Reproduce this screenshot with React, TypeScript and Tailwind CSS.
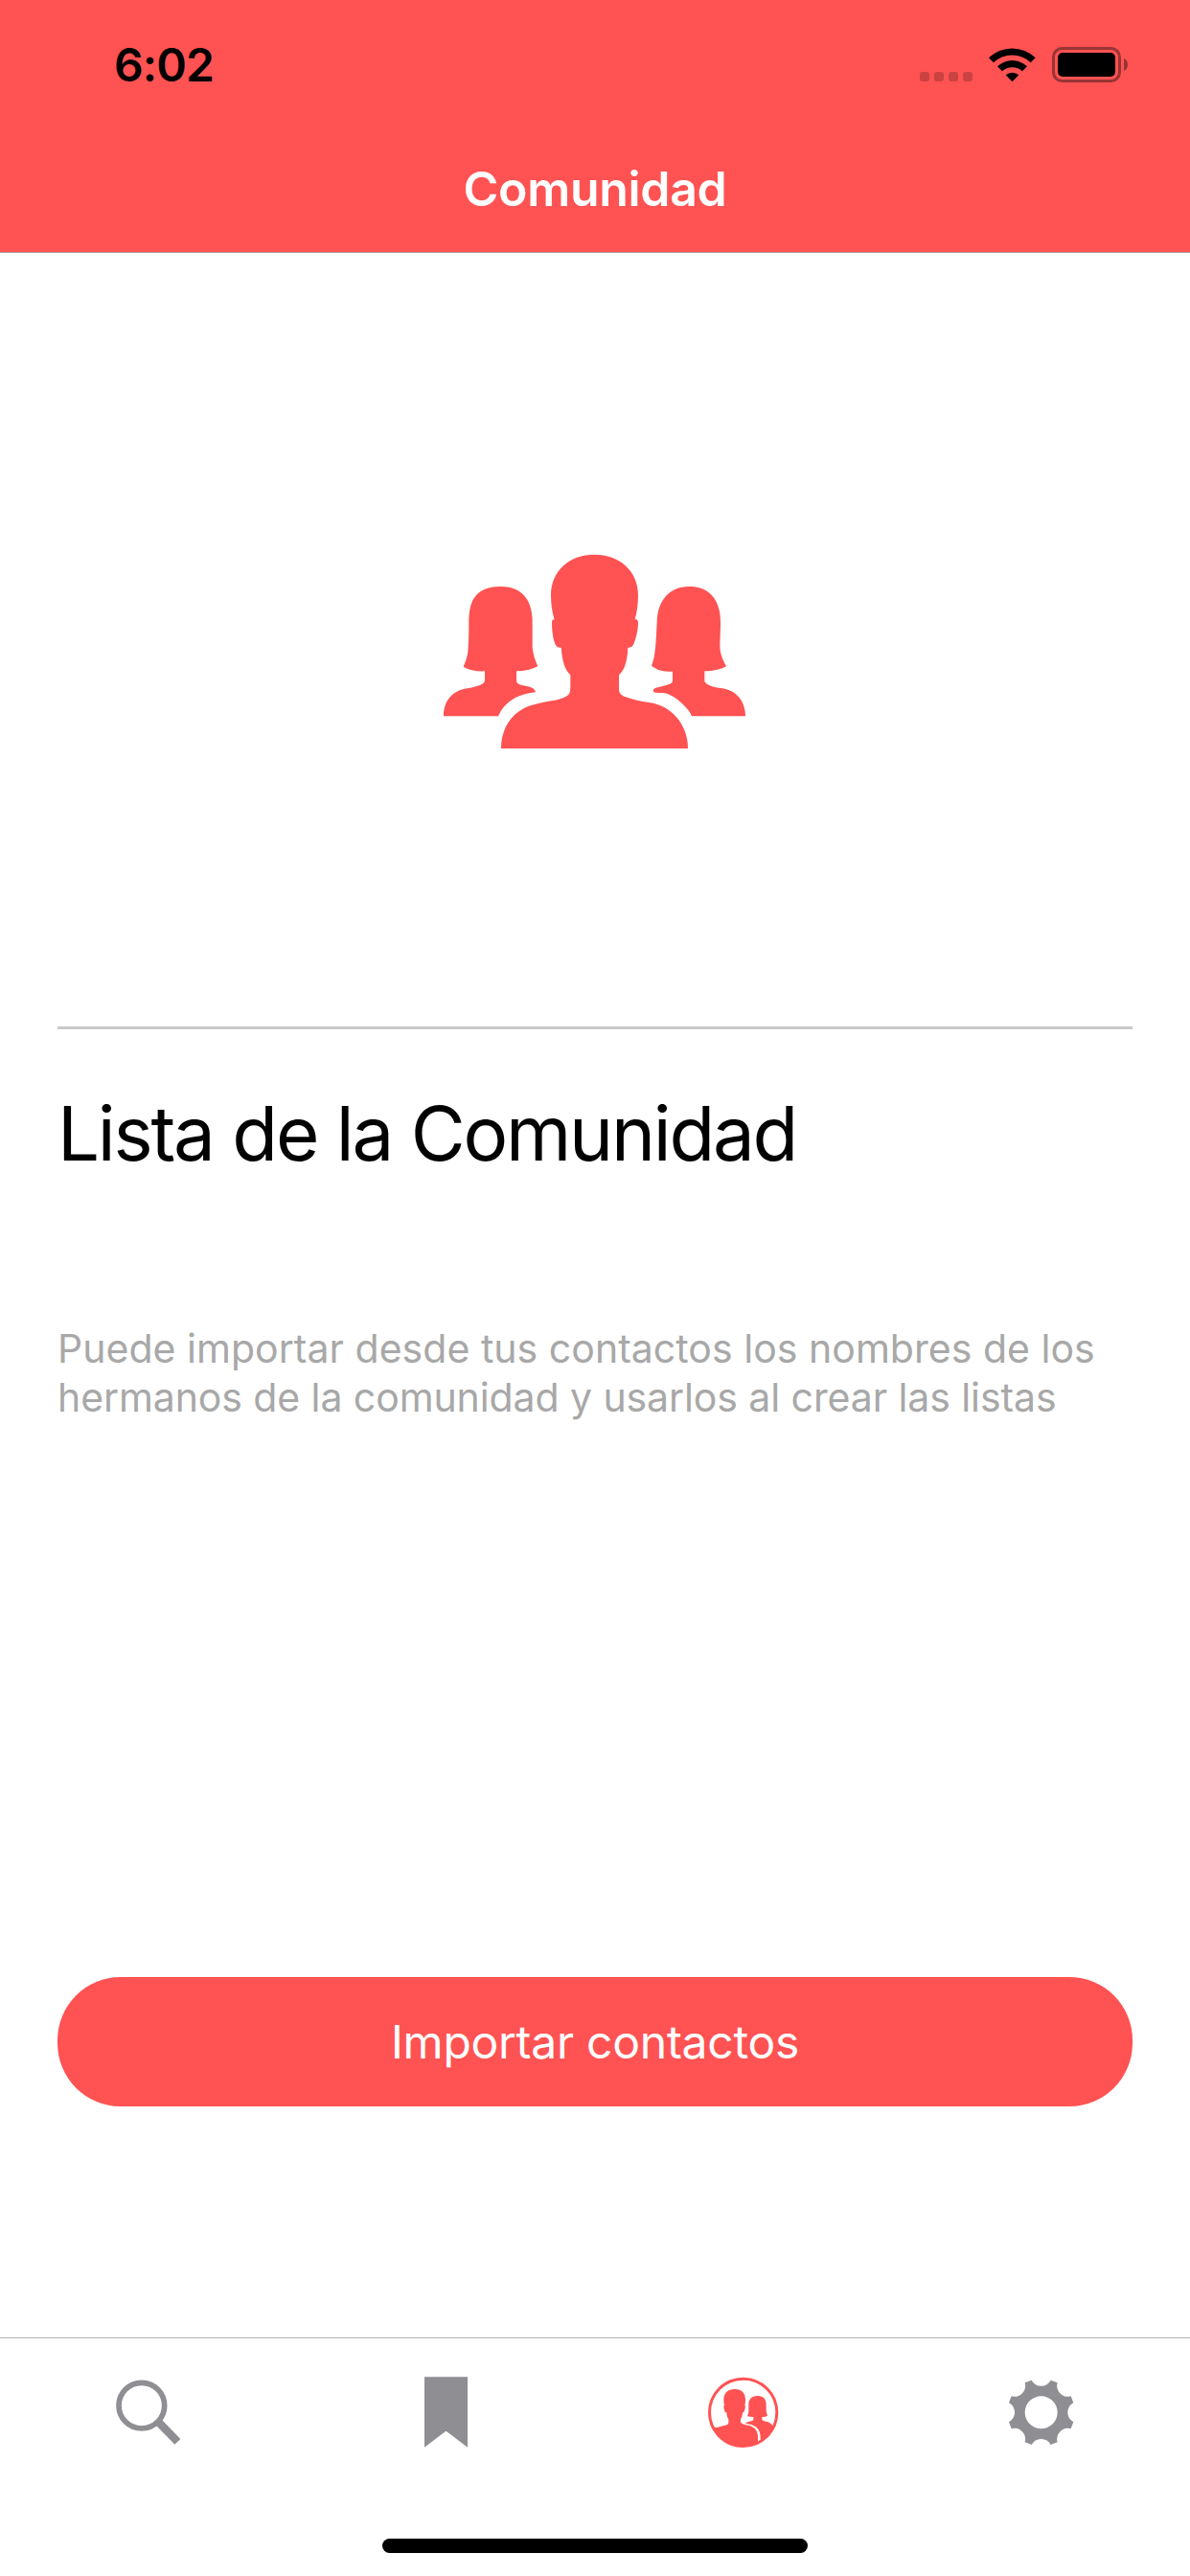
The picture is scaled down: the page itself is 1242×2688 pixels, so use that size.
function SignalDots() {
  return (
    <svg className="h-10 w-[70px]" viewBox="60 51 210 120" fill="#cb4242">
      <rect x="60" y="135" width="30" height="30" rx="9" />
      <rect x="105" y="135" width="30" height="30" rx="9" />
      <rect x="150" y="135" width="30" height="30" rx="9" />
      <rect x="195" y="135" width="30" height="30" rx="9" />
    </svg>
  );
}

function WifiIcon() {
  return (
    <svg className="h-10 w-[60px]" viewBox="270 51 180 120">
      <path d="M276 91A105 105 0 0 1 422 91L407 106A84 84 0 0 0 291 106Z" />
      <path d="M303 118A67 67 0 0 1 396 118L381 133A46 46 0 0 0 318 133Z" />
      <path d="M329 145A30 30 0 0 1 370 145L349.500 166Z" />
    </svg>
  );
}

function BatteryIcon() {
  return (
    <svg className="h-10 w-[90px]" viewBox="450 51 270 120">
      <rect x="478.500" y="61.500" width="207" height="102" rx="27" fill="none" stroke="#993434" strokeWidth="9" />
      <rect x="492" y="75" width="180" height="75" rx="15" />
      <path d="M699 92C715 99 715 125 699 132Z" fill="#993434" />
    </svg>
  );
}

function CommunityArt() {
  return (
    <svg className="h-60 w-90" viewBox="3 0 1080 720" fill="#ff5252">
      <path d="M541 56C620 56 678 108 678 182C678 212 674 238 668 259C675 257 678 262 678 270C678 292 672 316 666 331C662 344 656 348 646 347C645 372 641 396 634 411C629 421 624 427 618 433V477C618 491 626 497 639 502C664 511 690 516 716 520C786 531 834 591 834 663H249C249 591 292 540 352 526C376 519 397 514 418 512C434 509 450 504 459 496C465 490 466 483 466 468V433C459 426 453 417 449 408C442 391 439 370 437 347C427 349 421 344 417 333C411 317 408 293 408 268C408 261 411 258 416 260C409 238 405 212 405 184C405 108 462 56 541 56Z" />
      <path d="M247 156C307 156 336 189 344 234C347 250 347 262 347 280V346C349 369 356 388 364 406C346 415 324 421 297 421V450C297 464 312 464 333 469C347 473 356 478 357 487C312 491 273 509 250 543C246 549 243 556 240 562H69C69 514 97 481 143 475C162 471 180 467 190 461C197 457 198 453 198 445V421C170 422 149 418 131 407C137 393 143 377 145 361C147 340 148 310 148 272C148 246 150 232 153 220C163 178 194 156 247 156Z" />
      <path d="M838 156C891 156 922 185 932 230C936 246 936 262 936 278L934 340C934 366 943 386 954 406C934 416 914 421 886 421V454C893 463 907 471 930 473C982 476 1014 513 1014 562H846C841 548 831 537 818 524C798 505 777 492 757 489C747 488 739 491 727 487C723 480 727 474 740 472C755 467 774 465 784 457C786 455 786 454 786 451V422C760 423 738 419 720 404C723 395 727 384 729 371C734 340 735 306 737 267C739 202 774 156 838 156Z" />
    </svg>
  );
}

function SearchIcon() {
  return (
    <svg className="size-[76px]" viewBox="81 147 228 228" fill="none" stroke="#8e8e93">
      <circle cx="173.500" cy="240.500" r="71.500" strokeWidth="17" />
      <path d="M225 291L286 353.500" strokeWidth="25" />
    </svg>
  );
}

function BookmarkIcon() {
  return (
    <svg className="size-[76px]" viewBox="1011 147 228 228" fill="#8e8e93">
      <path d="M1059 151H1194V371L1126.500 320L1059 371Z" />
    </svg>
  );
}

function CommunityIcon() {
  return (
    <svg className="size-[76px]" viewBox="81 87 228 228" fill="#ff5252">
      <defs>
        <clipPath id="badge">
          <circle cx="197" cy="202" r="108" />
        </clipPath>
      </defs>
      <circle cx="197" cy="202" r="105.500" fill="none" stroke="#ff5252" strokeWidth="9" />
      <g clipPath="url(#badge)">
        <path d="M170 129C193 129 204 143 204 162C204 169 203 175 202 179C205 181 203 192 200 199C199 202 197 202 195 202C195 211 193 218 189 223V231C190 238 201 240 212 242C233 246 243 259 243 280V320H80V258C96 250 110 250 129 245C143 242 151 241 151 234V223C147 218 145 211 145 202C141 203 139 200 138 194C136 187 135 180 138 179C137 174 136 168 136 162C136 143 147 129 170 129Z" />
        <path d="M242 150C261 150 269 161 269 178V193C269 201 271 207 273 212C268 215 263 216 256 216V224C258 229 270 229 278 233C284 236 290 242 294 250V310H251V280C251 256 238 243 217 239C213 238 208 238 204 237C207 231 223 231 229 226V216C221 216 215 215 210 212C213 207 214 201 214 194V178C214 161 223 150 242 150Z" />
      </g>
    </svg>
  );
}

function GearIcon() {
  return (
    <svg className="size-[76px]" viewBox="-119 -115 228 228" fill="#8e8e93" fillRule="evenodd">
      <path d="M-30 -101A34 34 0 0 0 30 -101L51 -93A34 34 0 0 0 93 -51L101 -30A34 34 0 0 0 101 30L93 51A34 34 0 0 0 51 93L30 101A34 34 0 0 0 -30 101L-51 93A34 34 0 0 0 -93 51L-101 30A34 34 0 0 0 -101 -30L-93 -51A34 34 0 0 0 -51 -93ZM0 -51A51 51 0 1 0 0 51A51 51 0 1 0 0 -51Z" />
    </svg>
  );
}

const tabs = [
  { name: "Buscar", Icon: SearchIcon },
  { name: "Listas", Icon: BookmarkIcon },
  { name: "Comunidad", Icon: CommunityIcon },
  { name: "Ajustes", Icon: GearIcon },
];

export default function App() {
  return (
    <div className="flex h-[2688px] w-[1242px] flex-col bg-white font-['Inter',sans-serif] text-black">
      <header className="h-66 border-b border-[#b2a6a6] bg-[#ff5252]">
        <div className="flex h-[167px] items-start justify-between pl-[119px] pr-[62px]">
          <time className="mt-[39px] text-[48px] leading-[58px] font-semibold tracking-[-0.9px]">6:02</time>
          <div className="mt-[47px] flex">
            <SignalDots />
            <WifiIcon />
            <BatteryIcon />
          </div>
        </div>
        <h1 className="text-center text-[50px] leading-[60px] font-semibold tracking-[-0.3px] text-white">Comunidad</h1>
      </header>

      <main className="flex flex-1 flex-col px-15">
        <div className="flex h-[807px] justify-center pt-74">
          <CommunityArt />
        </div>
        <hr className="h-[3px] border-0 bg-[#c9c9c9]" />
        <h2 className="mt-[62px] text-[78px] leading-[94px] tracking-[-2.24px]">Lista de la Comunidad</h2>
        <p className="mt-38 text-[41px] leading-[51px] text-[#a8a8a8]">
          <span className="tracking-[0.03px]">Puede importar desde tus contactos los nombres de los</span>
          <br />
          <span className="tracking-[-0.09px]">hermanos de la comunidad y usarlos al crear las listas</span>
        </p>
        <button className="mt-auto mb-[241px] h-[135px] rounded-[66px] bg-[#ff5252] text-[48px] tracking-[-0.25px] text-white">
          Importar contactos
        </button>
      </main>

      <nav className="flex h-[249px] flex-col items-center justify-between border-t border-[#b2b2b2] bg-white pb-6">
        <div className="flex w-full pt-[39px]">
          {tabs.map(({ name, Icon }) => (
            <div key={name} className="flex w-[310px] justify-center" aria-label={name}>
              <Icon />
            </div>
          ))}
        </div>
        <div className="h-[15px] w-111 rounded-full bg-black" />
      </nav>
    </div>
  );
}
